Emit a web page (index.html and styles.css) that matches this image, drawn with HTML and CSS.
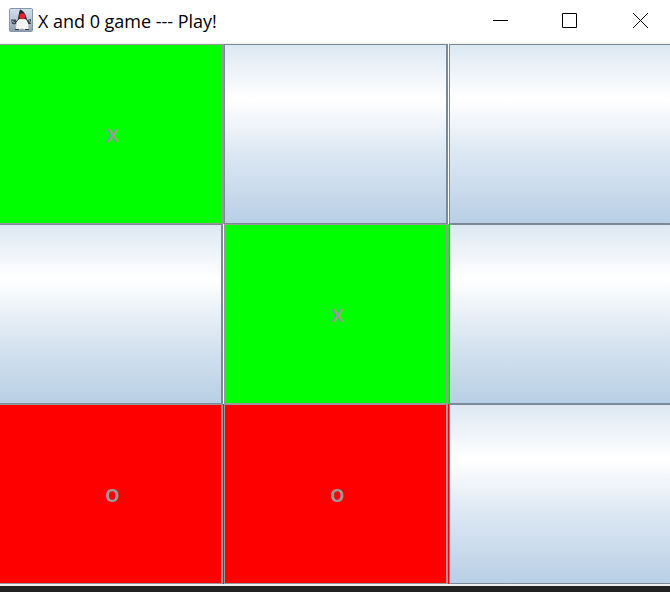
FILE: index.html
```html
<!DOCTYPE html>
<html lang="en">
<head>
<meta charset="utf-8">
<title>X and 0 game --- Play!</title>
<link rel="stylesheet" href="styles.css">
</head>
<body>
<header class="titlebar">
  <svg class="app-icon" width="24" height="24" viewBox="0 0 24 24">
    <defs><linearGradient id="tile" x1="0" y1="0" x2="0" y2="1"><stop offset="0" stop-color="#d3deeb"/><stop offset=".5" stop-color="#b9c5d3"/><stop offset="1" stop-color="#8d9bae"/></linearGradient></defs>
    <rect x=".5" y=".5" width="23" height="23" rx="1" fill="url(#tile)" stroke="#8496ad"/>
    <path d="M2 11.500h5v4.500H3zM18 12l4-1v5h-4z" fill="#3f4b55"/>
    <path d="M3 13l3 2M20 12l2 3" stroke="#a7b6c4"/>
    <path d="M10 10c-2 3-3 6-3 11.500h3l3-1 3 1h3.500c0-5-.5-8-2.500-11z" fill="#f4f4f4"/>
    <path d="M11 1.500C14.500 2.500 17 6 18 12l-2-1h-5.500L9 12c.3-4 1-7.500 2-10.500z" fill="#25272c"/>
    <path d="M9.500 11L5 16.500M17 11l4 5" stroke="#33383e"/>
    <circle cx="13.400" cy="8.200" r="3" fill="#e5202a"/>
    <path d="M6 21.500h4M16 21.500h4" stroke="#34383e"/>
  </svg>
  <h1 class="title">X and 0 game --- Play!</h1>
  <div class="controls">
    <svg width="16" height="16" viewBox="0 0 16 16"><path d="M1 8.500h15"/></svg>
    <svg class="maximize" width="16" height="16" viewBox="0 0 16 16"><path d="M1.500 1.500h14v14h-14z"/></svg>
    <svg width="16" height="16" viewBox="0 0 16 16"><path d="M1 1l15 15M16 1L1 16"/></svg>
  </div>
</header>
<main class="board">
  <button class="cell green" disabled><span>X</span></button>
  <button class="cell"><span></span></button>
  <button class="cell"><span></span></button>
  <button class="cell"><span></span></button>
  <button class="cell green" disabled><span>X</span></button>
  <button class="cell"><span></span></button>
  <button class="cell red" disabled><span>O</span></button>
  <button class="cell red" disabled><span>O</span></button>
  <button class="cell"><span></span></button>
</main>
</body>
</html>
```
FILE: styles.css
```css
* { box-sizing: border-box; }
body {
  margin: 0;
  height: 592px;
  overflow: hidden;
  background: #222;
}
.titlebar {
  display: flex;
  align-items: center;
  height: 44px;
  padding: 0 22px 4px 9px;
  background: #fff;
  border-bottom: 1px solid #f0f0f0;
}
.app-icon { flex: none; margin-top: 1px; }
.title {
  margin: 2px 0 0 5px;
  font: 400 18px/24px "Open Sans", "Noto Sans", sans-serif;
  letter-spacing: -0.02px;
  color: #000;
  white-space: nowrap;
}
.controls {
  display: flex;
  gap: 54px;
  margin: 1px 0 0 auto;
}
.controls svg { fill: none; stroke: #000; stroke-width: 1; }
.controls .maximize { margin: 0 1px 0 -1px; }
.board {
  display: grid;
  grid-template-columns: repeat(3, 225px);
  grid-template-rows: repeat(3, 180px);
  width: 675px;
  height: 542px;
  margin-left: -1px;
  background: #eee;
}
.cell {
  --line: #7a8a99;
  display: flex;
  margin: 0;
  padding: 0 1px 0 0;
  border: 0;
  background: #fff;
}
.cell span {
  display: flex;
  flex: 1;
  align-self: stretch;
  align-items: center;
  justify-content: center;
  padding: 1px 0 0 4px;
  border: 1px solid var(--line);
  border-right-width: 2px;
  background: linear-gradient(#dde8f3 0%, #fff 30%, #fff 31%, #dde8f3 60%, #b8cfe5 100%);
  font: 700 18px/20px "Open Sans", sans-serif;
  color: #999;
}
.green { --line: #999; background: #0f0; }
.green span { background: #0f0; }
.red { --line: #999; background: #f00; }
.red span { background: #f00; }
```
